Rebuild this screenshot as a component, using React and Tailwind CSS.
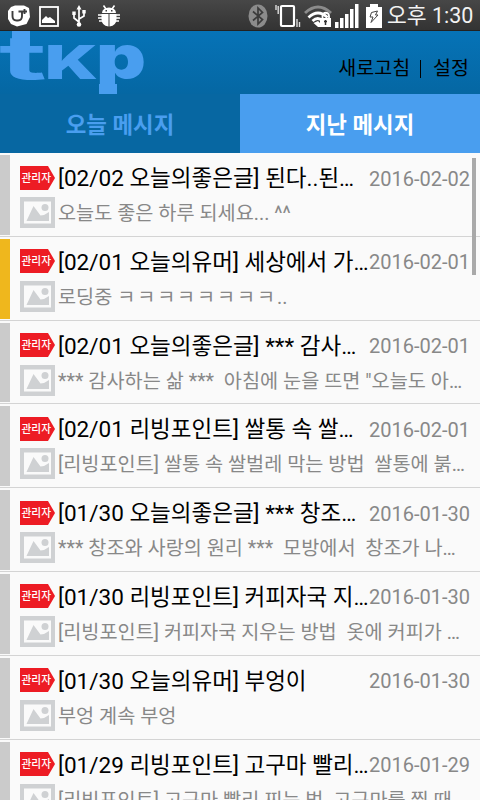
import { useState } from 'react';

const messages = [
  { id: 1, title: '[02/02 오늘의좋은글] 된다..된…', date: '2016-02-02', text: '오늘도 좋은 하루 되세요... ^^' },
  { id: 2, title: '[02/01 오늘의유머] 세상에서 가…', date: '2016-02-01', text: <>로딩중 <span className="tracking-[1.850px]">ㅋㅋㅋㅋㅋㅋㅋㅋ</span>..</>, marked: true },
  { id: 3, title: '[02/01 오늘의좋은글] *** 감사…', date: '2016-02-01', text: '*** 감사하는 삶 ***  아침에 눈을 뜨면 "오늘도 아…' },
  { id: 4, title: '[02/01 리빙포인트] 쌀통 속 쌀…', date: '2016-02-01', text: '[리빙포인트] 쌀통 속 쌀벌레 막는 방법  쌀통에 붉…' },
  { id: 5, title: '[01/30 오늘의좋은글] *** 창조…', date: '2016-01-30', text: '*** 창조와 사랑의 원리 ***  모방에서  창조가 나…' },
  { id: 6, title: '[01/30 리빙포인트] 커피자국 지…', date: '2016-01-30', text: '[리빙포인트] 커피자국 지우는 방법  옷에 커피가 …' },
  { id: 7, title: '[01/30 오늘의유머] 부엉이', date: '2016-01-30', text: '부엉 계속 부엉' },
  { id: 8, title: '[01/29 리빙포인트] 고구마 빨리…', date: '2016-01-29', text: '[리빙포인트] 고구마 빨리 찌는 법  고구마를 찔 때' },
];

const StatusBar = () => (
  <div className="flex h-[31px] shrink-0 items-center justify-between bg-linear-to-b from-[#474747] to-[#333] border-b border-[#222] pt-[2px] text-white">
    <div className="flex items-center pl-[7px]">
      <svg width="24" height="22" viewBox="0 0 24 22">
        <path d="M4 2 8 .500 17 .500 22 3 23 12 19.500 19 10 21.500 4 19 1 14V6Z" fill="#fff" />
        <path d="M5.500 6v5q0 4.500 4 4.500h1.500q4 0 4-4.500V6.500H11.500M15 6.500h5M17.500 4v5" fill="none" stroke="#3d3d3d" strokeWidth="1.900" />
      </svg>
      <svg className="ml-[8px]" width="20" height="21" viewBox="0 0 20 21">
        <rect x="1" y="1" width="18" height="19" fill="none" stroke="#fff" strokeWidth="1.800" />
        <path d="M3 17v-3l4-4 2 2 2-1 5 4v2Z" fill="#fff" />
      </svg>
      <svg className="ml-[13px]" width="14" height="22" viewBox="0 0 14 22">
        <path d="M7 3v16M7 17l-5-4V7M7 14l5-3V6" fill="none" stroke="#fff" strokeWidth="1.700" />
        <path d="m7 0 2.500 4.500h-5ZM.3 6.500h3.400v3.500H.3ZM10.300 5h3.400v3.500h-3.400Z" fill="#fff" />
        <circle cx="7" cy="19.500" r="2.300" fill="#fff" />
      </svg>
      <svg className="ml-[12px]" width="22" height="22" viewBox="0 0 22 22">
        <path d="M4 8a7 5.500 0 0 1 14 0ZM3.500 9h7v12.500q-7-1-7-7.500ZM11.500 9h7v5q0 6.500-7 7.500Z" fill="#fff" />
        <path d="m5.500 .5 2.500 3.500M16.500 .5 14 4M0 10h4M0 13h4M1 16h4M18 10h4M18 13h4M17 16h4" stroke="#fff" strokeWidth="1.600" />
        <path d="M7.500 5h1.500v1.500H7.500ZM13 5h1.500v1.500H13Z" fill="#3d3d3d" />
      </svg>
    </div>
    <div className="flex items-center pr-[9px]">
      <svg width="20" height="24" viewBox="0 0 20 24">
        <ellipse cx="10" cy="12" rx="9.500" ry="11.500" fill="#8b8b8b" />
        <path d="m5 7.500 9.500 8L10 20V4l4.500 4.500L5 16.500" fill="none" stroke="#3b3b3b" strokeWidth="1.700" />
      </svg>
      <svg className="ml-[7px]" width="26" height="24" viewBox="0 0 26 24">
        <rect x="6" y="2" width="13" height="20" rx="1" fill="none" stroke="#fff" strokeWidth="2.200" />
        <path d="M3.200 2v8M1 1v5M22 15v8M24.500 18v5" stroke="#ddd" strokeWidth="1.400" />
      </svg>
      <svg className="ml-[3px]" width="28" height="23" viewBox="0 0 28 23">
        <path d="M1 8Q14-4 27 8" fill="none" stroke="#8b8b8b" strokeWidth="3" />
        <path d="M4.500 12.500q9.500-9 19 0M8.500 16q5.500-5 10 0" fill="none" stroke="#fff" strokeWidth="2.800" />
        <path d="m9.500 18 4.500-2 2 2v4h-2Z" fill="#fff" />
        <path d="M18.500 14v-3a3.200 3.200 0 0 1 6.500 0v3" fill="none" stroke="#fff" strokeWidth="1.800" />
        <rect x="16" y="13" width="11" height="9" fill="#fff" />
        <path d="M21.500 15v5M20 16.500h3" stroke="#333" strokeWidth="1.500" />
      </svg>
      <svg className="ml-[3px]" width="24" height="24" viewBox="0 0 24 24">
        <path d="M0 18h3.500v6H0ZM5 14h3.500v10H5ZM10 10h3.500v14H10ZM15 5h3.500v19H15ZM20 0h3.500v24H20Z" fill="#fff" />
      </svg>
      <svg className="ml-[7px]" width="16" height="24" viewBox="0 0 16 24">
        <path d="M4 0h8v3h4v21H0V3h4Z" fill="#fff" />
        <path d="m5.500 8.500 6-1.500-2 4h2.500l-7 7.500 2-5.500H4Z" fill="#fff" stroke="#444" strokeWidth="1" />
      </svg>
      <span className="ml-[5px] w-[84px] whitespace-pre text-[21.500px] leading-[28px] text-[#f2f2f2]">오후 1:30</span>
    </div>
  </div>
);

const Logo = () => (
  <svg className="block overflow-visible" width="160" height="63" viewBox="0 31 160 63">
    <g fill="#499eef" fontFamily="Inter" fontWeight="900">
      <rect x="12" y="31" width="18" height="16" />
      <text x="-1" y="79" fontSize="60" fontWeight="700" textLength="48" lengthAdjust="spacingAndGlyphs">t</text>
      <text x="45" y="78.500" fontSize="47" textLength="53" lengthAdjust="spacingAndGlyphs">K</text>
      <text transform="translate(0 79) scale(1 1.150)" x="96" y="0" fontSize="54" textLength="50" lengthAdjust="spacingAndGlyphs">p</text>
      <rect x="99" y="84" width="18" height="10" />
    </g>
  </svg>
);

const AdminBadge = () => (
  <svg className="block" width="35" height="24" viewBox="0 0 35 24">
    <path d="M0 0h28l7 12-7 12H0Z" fill="#ed1c24" />
    <text x="1.500" y="15.500" fontSize="11.500" fontWeight="500" fill="#fff" textLength="29.500" lengthAdjust="spacingAndGlyphs">관리자</text>
  </svg>
);

const PhotoIcon = () => (
  <svg className="block" width="35" height="31" viewBox="0 0 35 31">
    <path d="M0 0h35v31H0Z" fill="#cfd1d3" />
    <path d="M4 4.500h27v22H4Z" fill="#fafafa" />
    <path d="M6.500 24 13.500 9l7 9.500 3.500-.500 5-3v9Z" fill="#cfd1d3" />
    <circle cx="25" cy="10.500" r="3.500" fill="#cfd1d3" />
  </svg>
);

const MessageRow = ({ message }) => (
  <li className="flex h-[83.800px] shrink-0 border-b border-[#d4d4d4] pt-[2px] pb-[1px]">
    <div className={`w-[10px] shrink-0 ${message.marked ? 'bg-[#efb71d]' : 'bg-[#cbcbcb]'}`}></div>
    <div className="ml-[10px] min-w-0 flex-1 pr-[10px]">
      <div className="flex h-[42px] items-center pt-[3px]">
        <AdminBadge />
        <span className="ml-[3px] min-w-0 flex-1 whitespace-pre pt-[1px] text-[22.500px] leading-[30px] text-black">{message.title}</span>
        <span className="whitespace-pre pt-[2px] text-[20px] leading-[30px] text-[#888]">{message.date}</span>
      </div>
      <div className="flex h-[31px] items-center">
        <PhotoIcon />
        <span className="ml-[3px] whitespace-pre pt-[2px] text-[19.700px] leading-[29px] text-[#888]">{message.text}</span>
      </div>
    </div>
  </li>
);

export default function App() {
  const [tab, setTab] = useState('past');

  return (
    <div className="relative flex h-[800px] w-[480px] flex-col overflow-hidden bg-[#fafafa] font-[Roboto,'Noto_Sans_CJK_KR',sans-serif]">
      <StatusBar />
      <header className="flex h-[63px] shrink-0 justify-between bg-linear-to-b from-[#0673b7] to-[#0567a3]">
        <Logo />
        <div className="flex items-center pt-[13px] pr-[11px] text-[19.500px] text-black">
          <button type="button">새로고침</button>
          <span className="mr-[12px] ml-[10px] h-[18px] w-px bg-black"></span>
          <button type="button">설정</button>
        </div>
      </header>
      <nav className="grid h-[59px] shrink-0 grid-cols-2 text-[22.400px] font-bold">
        <button type="button" onClick={() => setTab('today')} className={`pt-[5px] ${tab === 'today' ? 'bg-[#499eef] text-white' : 'bg-[#0767a2] text-[#499eef]'}`}>
          오늘 메시지
        </button>
        <button type="button" onClick={() => setTab('past')} className={`pt-[5px] ${tab === 'past' ? 'bg-[#499eef] text-white' : 'bg-[#0767a2] text-[#499eef]'}`}>
          지난 메시지
        </button>
      </nav>
      <ul className="flex min-h-0 flex-1 flex-col overflow-hidden">
        {messages.map((message) => (
          <MessageRow key={message.id} message={message} />
        ))}
      </ul>
      <div className="absolute top-[158px] right-[4px] h-[117px] w-[4px] bg-[#a9a9a9]"></div>
    </div>
  );
}
